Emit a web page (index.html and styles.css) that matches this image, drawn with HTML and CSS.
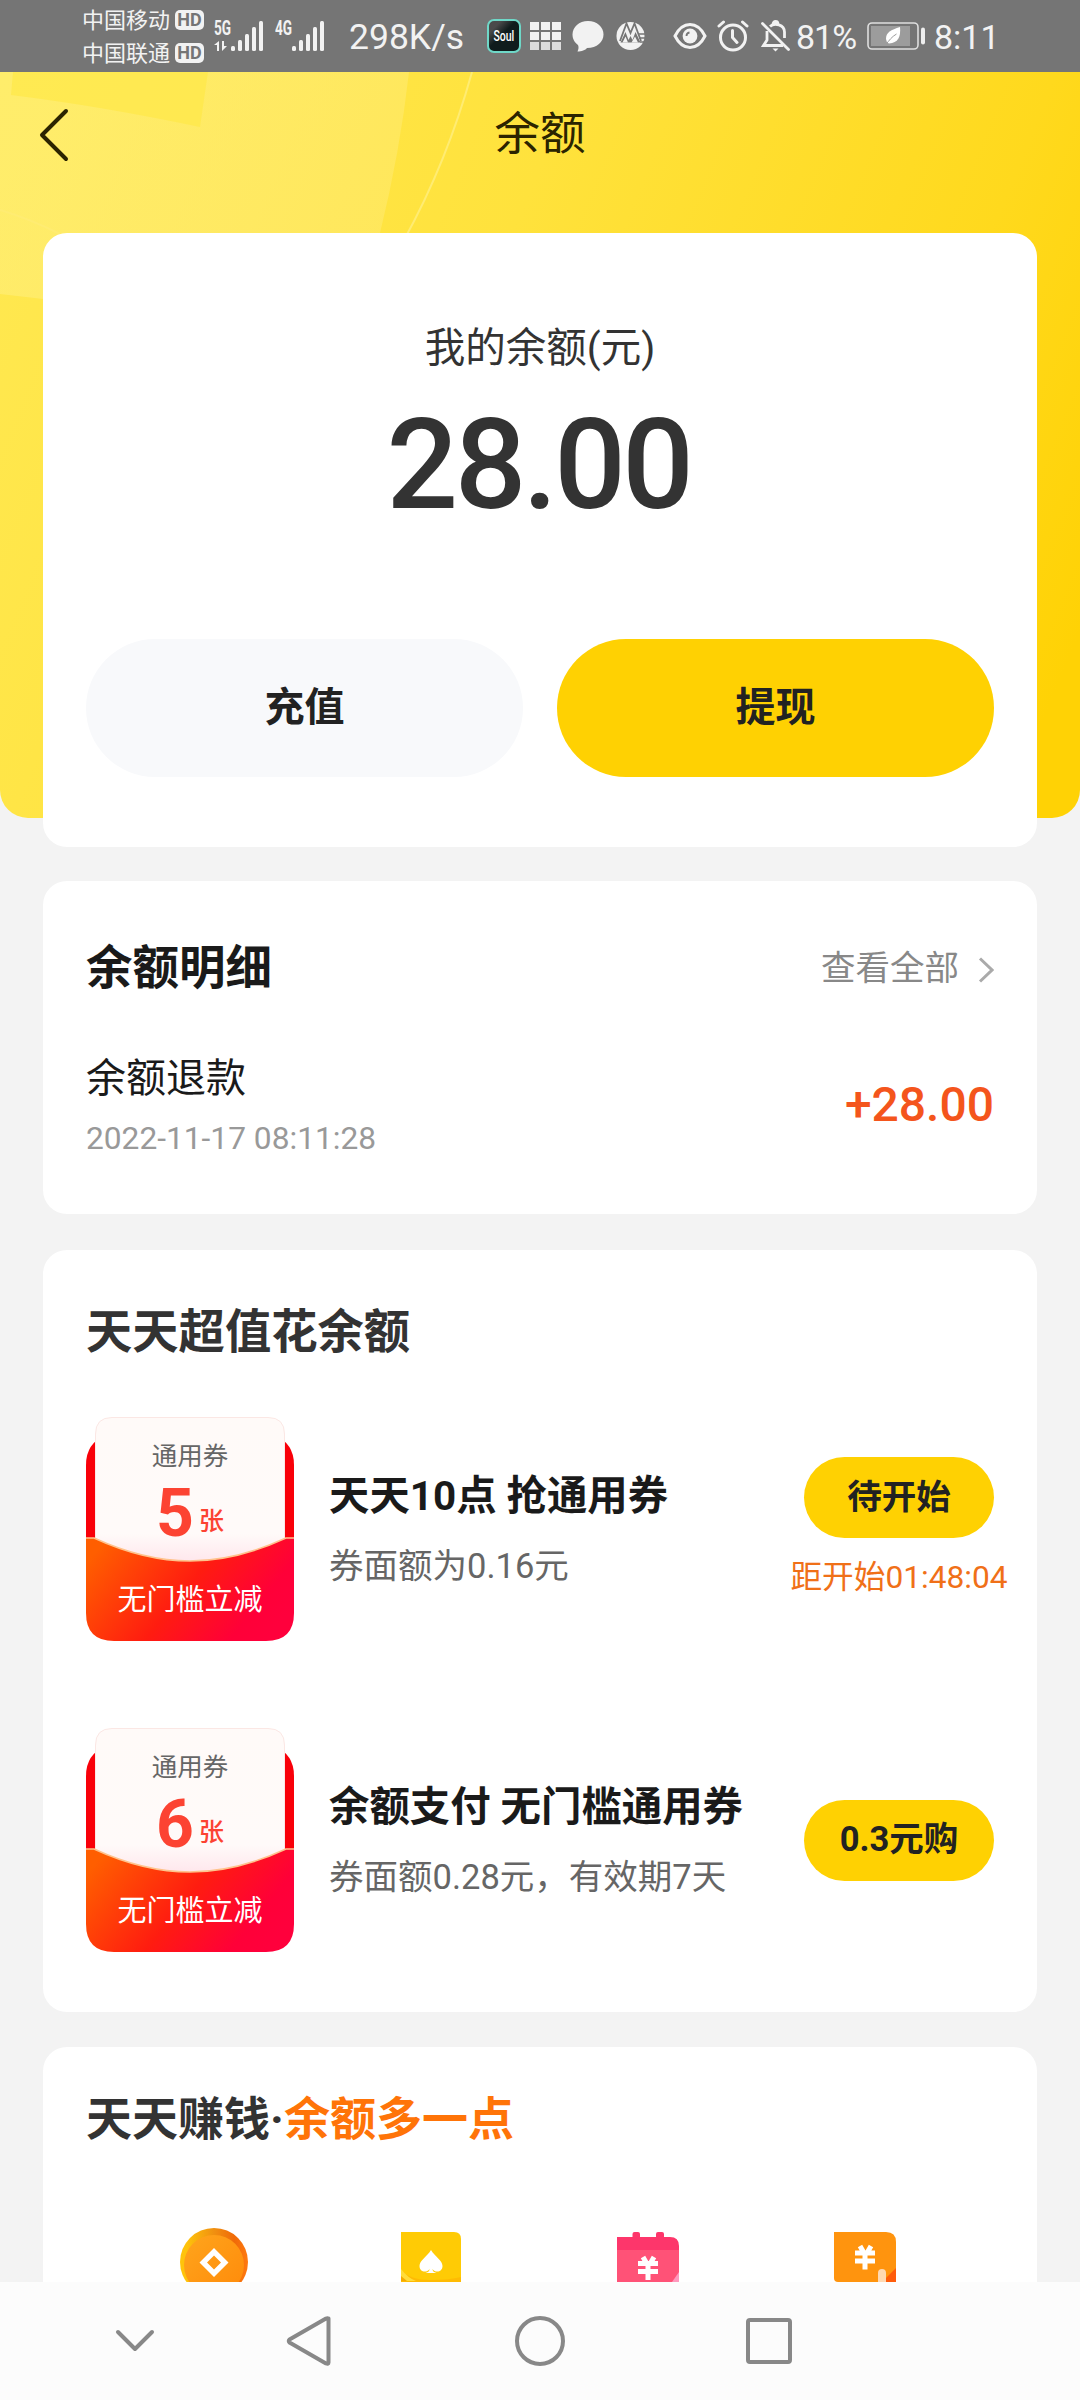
FILE: index.html
```html
<!DOCTYPE html>
<html lang="zh-CN">
<head>
<meta charset="utf-8">
<title>余额</title>
<link rel="stylesheet" href="styles.css">
</head>
<body>
<div class="app">
  <header class="status">
    <div class="carriers">
      <div class="carrier"><span>中国移动</span><b class="hd">HD</b></div>
      <div class="carrier"><span>中国联通</span><b class="hd">HD</b></div>
    </div>
    <div class="signal signal-5g">
      <span class="net">5G</span>
      <svg width="51" height="32" viewBox="0 0 51 32" fill="#f2f2f2">
        <path d="M0 25l5-4v10H3v-6zM8 21v10l5-5h-3v-5z"/>
        <rect x="17" y="26" width="4" height="5" rx="1.5"/><rect x="24" y="20" width="4" height="11" rx="1.5"/><rect x="31" y="14" width="4" height="17" rx="1.5"/><rect x="38" y="7" width="4" height="24" rx="1.5"/><rect x="45" y="1" width="4" height="30" rx="1.5"/>
      </svg>
    </div>
    <div class="signal signal-4g">
      <span class="net">4G</span>
      <svg width="51" height="32" viewBox="0 0 51 32" fill="#f2f2f2">
        <rect x="17" y="26" width="4" height="5" rx="1.5"/><rect x="24" y="20" width="4" height="11" rx="1.5"/><rect x="31" y="14" width="4" height="17" rx="1.5"/><rect x="38" y="7" width="4" height="24" rx="1.5"/><rect x="45" y="1" width="4" height="30" rx="1.5"/>
      </svg>
    </div>
    <span class="speed">298K/s</span>
    <span class="soul"><span>Soul</span></span>
    <svg class="i-grid" width="32" height="30" viewBox="0 0 32 30" fill="#f2f2f2">
      <path d="M0 1h9v8H0zM11 1h9v8h-9zM22 1h9v8h-9zM0 11h9v8H0zM11 11h9v8h-9zM22 11h9v8h-9z"/>
      <path d="M0 21h9v8H0zM11 21h9v8h-9zM22 21h9v8h-9z" fill="#dcdcdc"/>
    </svg>
    <svg class="i-chat" width="32" height="32" viewBox="0 0 32 32" fill="#f2f2f2">
      <path d="M16 1C7 1 .5 7 .5 14.500c0 5 2.500 8 5.500 10.500 1 2.500.5 4-.5 6.500 4 0 8-1.500 9.500-3.500C25 28 31.500 22 31.500 14.500S25 1 16 1z"/>
    </svg>
    <svg class="i-bank" width="30" height="30" viewBox="0 0 30 30">
      <circle cx="14.500" cy="15" r="14" fill="#f2f2f2"/>
      <path d="M4 20L10.500 2.500 14.500 12 18.500 2.500 25 20" fill="none" stroke="#757575" stroke-width="1.800"/>
      <path d="M4.500 21.500L9.500 11l3 8 2-4 2 4 3-8 5 10.500z" fill="#757575"/>
      <path d="M6.500 21.500l3-6 2.500 6zM15.500 21.500l3.500-6 3 6z" fill="#f2f2f2"/>
      <path d="M22 13h8M23 17h7M24 21h6" stroke="#757575" stroke-width="1.500"/>
    </svg>
    <svg class="i-eye" width="34" height="28" viewBox="0 0 34 28" fill="none" stroke="#f2f2f2" stroke-width="3">
      <path d="M2 14C6 6 11 2.500 17 2.500S28 6 32 14C28 22 23 25.500 17 25.500S6 22 2 14z"/>
      <circle cx="17" cy="14" r="7.400" fill="#f2f2f2" stroke="none"/>
      <path d="M13.500 14a3.500 3.500 0 0 1 3-3.500" stroke="#757575" stroke-width="1.800"/>
    </svg>
    <svg class="i-alarm" width="32" height="32" viewBox="0 0 32 32" fill="none" stroke="#f2f2f2" stroke-width="3" stroke-linecap="round">
      <circle cx="16" cy="17.500" r="12.500"/><path d="M15.500 10.500v7l4.500 5M2 6l4.500-4M30 6l-4.500-4"/>
    </svg>
    <svg class="i-bell" width="30" height="32" viewBox="0 0 30 32" fill="none" stroke="#f2f2f2" stroke-width="2.800">
      <path d="M6 11v9l-3.500 5.500H22M9 6.500C13 2.500 24 4 23.500 13v5M12 4.500c0-4 5-4 5 0"/><path d="M1.500 3.500l26 26" stroke-linecap="round"/>
      <path d="M11.500 28.500h6l-3 3z" fill="#f2f2f2" stroke="none"/>
    </svg>
    <span class="percent">81%</span>
    <svg class="i-battery" width="59" height="28" viewBox="0 0 59 28">
      <rect x="1" y="1" width="50" height="26" rx="4" fill="none" stroke="#dedede" stroke-width="1.600"/>
      <rect x="4" y="4" width="39" height="20" fill="#9c9c9c"/>
      <rect x="54" y="5.500" width="4" height="17" rx="2" fill="#eee"/>
      <path d="M33 5c-9 3-14 5-14 12l1 3.500 2 1C31 21 34 15 33 5z" fill="#fff"/><path d="M18.500 23c4-5 6-8 11-11" stroke="#9c9c9c" fill="none"/>
    </svg>
    <span class="clock">8:11</span>
  </header>

  <main class="page">
    <svg class="hero" width="1080" height="746" viewBox="0 0 1080 746">
      <defs>
        <linearGradient id="heroFill" gradientUnits="userSpaceOnUse" x1="0" y1="120" x2="1080" y2="560">
          <stop offset="0" stop-color="#ffe850"/><stop offset=".42" stop-color="#ffe23c"/><stop offset=".8" stop-color="#ffd91d"/><stop offset="1" stop-color="#ffd205"/>
        </linearGradient>
        <linearGradient id="sheen" x1="0" y1="0" x2="1" y2=".4">
          <stop offset="0" stop-color="#fff490" stop-opacity=".42"/><stop offset="1" stop-color="#fff1a0" stop-opacity=".28"/>
        </linearGradient>
      </defs>
      <path d="M0 0H1080V718A28 28 0 0 1 1052 746H28A28 28 0 0 1 0 718z" fill="url(#heroFill)"/>
      <path d="M0 0H409Q400 80 380 161L330 260 0 222z" fill="url(#sheen)"/>
      <path d="M13 0H208L200 55Q100 34 11 23z" fill="#ffe84a" fill-opacity=".75"/>
      <path d="M472 0Q447 90 404 168M0 138Q30 147 60 162" fill="none" stroke="#ffec72" stroke-width="2"/>
    </svg>
    <div class="titlebar">
      <svg class="back" width="30" height="54" viewBox="0 0 30 54" fill="none" stroke="#2b2400" stroke-width="4" stroke-linecap="round" stroke-linejoin="round"><path d="M27 3L3 27l24 24"/></svg>
      <h1 class="title">余额</h1>
    </div>

    <section class="card balance">
      <div class="label">我的余额(元)</div>
      <div class="amount">28.00</div>
      <div class="actions">
        <button class="btn btn-plain">充值</button>
        <button class="btn btn-main">提现</button>
      </div>
    </section>

    <section class="card detail">
      <div class="head">
        <h2>余额明细</h2>
        <a class="more">查看全部<svg width="16" height="26" viewBox="0 0 16 26" fill="none" stroke="#aaa" stroke-width="3"><path d="M2 1.500L14 13 2 24.500"/></svg></a>
      </div>
      <div class="record">
        <div>
          <div class="record-name">余额退款</div>
          <div class="record-time">2022-11-17 08:11:28</div>
        </div>
        <div class="record-sum">+28.00</div>
      </div>
    </section>

    <section class="card spend">
      <h2 class="soft">天天超值花余额</h2>
      <div class="offer">
        <div class="coupon">
          <svg class="coupon-bg" width="208" height="225" viewBox="0 0 208 225">
            <defs>
              <linearGradient id="pocket" x1="0" y1=".25" x2="1" y2=".65"><stop offset="0" stop-color="#ff5e00"/><stop offset=".5" stop-color="#ff1c10"/><stop offset=".85" stop-color="#ff0038"/><stop offset="1" stop-color="#ff003c"/></linearGradient>
              <linearGradient id="paper" x1="0" y1="0" x2="0" y2="1"><stop offset="0" stop-color="#fffaf8"/><stop offset=".8" stop-color="#fffaf9"/><stop offset="1" stop-color="#ffe6ec"/></linearGradient>
            </defs>
            <path d="M0 124V48Q0 26 20 18H188Q208 26 208 48V124z" fill="#f90009"/>
            <path d="M9.500 135V17Q9.500.5 26 .5H182Q198.500.5 198.500 17V135L150 146H58z" fill="url(#paper)" stroke="#fbe7e4"/>
            <path d="M0 121H8Q58 144 104 144T200 121H208V196Q208 224 180 224H28Q0 224 0 196z" fill="url(#pocket)"/>
            <path d="M0 121H8Q58 144 104 144T200 121H208" fill="none" stroke="#ffc38c" stroke-width="1.600"/>
          </svg>
          <div class="coupon-kind">通用券</div>
          <div class="coupon-count"><b>5</b><span>张</span></div>
          <div class="coupon-note">无门槛立减</div>
        </div>
        <div class="offer-text"><h3>天天10点 抢通用券</h3><p>券面额为0.16元</p></div>
        <div class="offer-act act-timed"><button class="pill">待开始</button><span class="timer">距开始01:48:04</span></div>
      </div>
      <div class="offer">
        <div class="coupon">
          <svg class="coupon-bg" width="208" height="225" viewBox="0 0 208 225">
            <path d="M0 124V48Q0 26 20 18H188Q208 26 208 48V124z" fill="#f90009"/>
            <path d="M9.500 135V17Q9.500.5 26 .5H182Q198.500.5 198.500 17V135L150 146H58z" fill="url(#paper)" stroke="#fbe7e4"/>
            <path d="M0 121H8Q58 144 104 144T200 121H208V196Q208 224 180 224H28Q0 224 0 196z" fill="url(#pocket)"/>
            <path d="M0 121H8Q58 144 104 144T200 121H208" fill="none" stroke="#ffc38c" stroke-width="1.600"/>
          </svg>
          <div class="coupon-kind">通用券</div>
          <div class="coupon-count"><b>6</b><span>张</span></div>
          <div class="coupon-note">无门槛立减</div>
        </div>
        <div class="offer-text"><h3>余额支付 无门槛通用券</h3><p>券面额0.28元，有效期7天</p></div>
        <div class="offer-act"><button class="pill">0.3元购</button></div>
      </div>
    </section>

    <section class="card earn">
      <h2 class="soft">天天赚钱·<em>余额多一点</em></h2>
      <div class="tasks">
        <svg width="70" height="70" viewBox="0 0 70 70">
          <defs><linearGradient id="rim" x1="0" y1="0" x2="1" y2="0"><stop offset=".1" stop-color="#ffc30b"/><stop offset=".5" stop-color="#f09010"/><stop offset=".8" stop-color="#f06a08"/><stop offset="1" stop-color="#ff7a10"/></linearGradient>
          <linearGradient id="coin" x1="0" y1="0" x2="1" y2="1"><stop offset="0" stop-color="#ffa51c"/><stop offset="1" stop-color="#ff8a0a"/></linearGradient></defs>
          <circle cx="35" cy="34" r="34" fill="url(#rim)"/><ellipse cx="35" cy="37" rx="30" ry="30" fill="url(#coin)"/>
          <path d="M35 20L49.500 34.500 35 49 20.500 34.500zM35 27.500l-7 7 7 7 7-7z" fill="#fff" fill-rule="evenodd"/>
        </svg>
        <svg width="62" height="70" viewBox="0 0 62 70">
          <path d="M1 4H54Q61 4 61 11V70H1z" fill="#ffcb05"/><path d="M1 42Q10 52 30 52T61 49V70H1z" fill="#ffbb03"/><path d="M1 41Q8 50 16 53H1z" fill="#ffdc3a"/><path d="M1 48l6 5H1z" fill="#f5aa00"/>
          <path d="M31 22C27 29 19.500 32 19.500 38c0 6 7 7.500 10 3 0 2-1 3-4 4h11c-3-1-4-2-4-4 3 4.500 10 3 10-3 0-6-7.500-9-11.500-16z" fill="#fff"/>
        </svg>
        <svg width="62" height="70" viewBox="0 0 62 70">
          <path d="M0 9H15.500V6Q15.500 4 17.500 4H21Q23 4 23 6V9H39V6Q39 4 41 4h4Q47 4 47 6V9H53Q62 9 62 18V24H0z" fill="#fd366b"/><path d="M0 22H62V70H0z" fill="#ff5277"/><path d="M62 44V54H55z" fill="#ff98bd"/>
          <path d="M26 29l4 7M37 29l-4 7M21 35.500h20M21 43.500h20M31 33v19" stroke="#fff" stroke-width="5"/>
        </svg>
        <svg width="62" height="70" viewBox="0 0 62 70">
          <path d="M0 4H52Q62 4 62 14V54H4Q0 54 0 50z" fill="#ff940e"/><path d="M62 40V54H48z" fill="#ff5c0b"/><rect x="44" y="41" width="8" height="20" rx="4" fill="#ffd9b2"/>
          <path d="M26 18l4 7M37 18l-4 7M21 25h20M21 33h20M31 22.500v19" stroke="#fff" stroke-width="5"/>
        </svg>
      </div>
    </section>
  </main>

  <nav class="navbar">
    <svg class="nav-hide" width="40" height="24" viewBox="0 0 40 24"><path d="M3 3l17 17L37 3"/></svg>
    <svg class="nav-back" width="46" height="52" viewBox="0 0 46 52"><path d="M42.500 3.500Q41.500 2.800 40 3.500L3.500 24.500Q2 26 3.500 27.500L40 48.500Q42.500 49.500 42.500 47.500z"/></svg>
    <svg class="nav-home" width="52" height="52" viewBox="0 0 52 52"><circle cx="26" cy="26" r="23"/></svg>
    <svg class="nav-recent" width="48" height="48" viewBox="0 0 48 48"><rect x="3" y="3" width="42" height="42" rx="2"/></svg>
  </nav>
</div>
</body>
</html>
```
FILE: styles.css
```css
* { box-sizing: border-box; margin: 0; padding: 0; }
body {
  width: 1080px;
  height: 2400px;
  overflow: hidden;
  background: #f3f3f3;
  font-family: Roboto, "Noto Sans CJK SC", sans-serif;
  color: #1a1a1a;
}
svg { display: block; flex: none; }
button { border: 0; font-family: inherit; color: #222; }
.app { display: flex; flex-direction: column; height: 2400px; }

/* status bar */
.status {
  display: flex;
  align-items: center;
  flex: none;
  height: 72px;
  padding-left: 82px;
  background: #757575;
  color: #f2f2f2;
  white-space: nowrap;
}
.carriers { width: 132px; padding-top: 1px; }
.carrier { display: flex; align-items: center; gap: 5px; height: 33px; font-size: 22px; line-height: 33px; }
.hd {
  width: 29px; height: 20px;
  border-radius: 5px;
  background: #f2f2f2;
  color: #757575;
  font-size: 18px;
  line-height: 20px;
  text-align: center;
}
.signal { position: relative; width: 61px; }
.net {
  position: absolute;
  left: 0; top: -1px;
  font: 700 20px/18px Roboto, sans-serif;
  transform: scaleX(.68);
  transform-origin: left;
}
.signal-4g { width: 74px; }
.speed { width: 138px; padding-top: 2px; font-size: 35.500px; }
.soul {
  display: flex;
  justify-content: center;
  width: 34px; height: 34px;
  border: 2px solid #6fd8c8;
  border-radius: 7px;
  background: linear-gradient(135deg, #4a4a4a 20%, #101c1c 45%);
  color: #fff;
  font: 500 15px/30px Roboto, sans-serif;
}
.soul span { transform: scaleX(.7); }
.i-grid { margin-left: 9px; }
.i-chat { margin-left: 10px; }
.i-bank { margin-left: 12px; }
.i-eye { margin-left: 27px; }
.i-alarm { margin-left: 10px; }
.i-bell { margin-left: 12px; }
.percent { width: 62px; margin-left: 5px; padding-top: 2px; font-size: 34px; letter-spacing: -1px; }
.i-battery { margin-left: 9px; }
.clock { margin-left: 8px; padding-top: 2px; font-size: 34px; }

/* page */
.page { position: relative; flex: none; height: 2210px; padding: 0 43px; overflow: hidden; }
.hero { position: absolute; left: 0; top: 0; }
.titlebar { position: relative; display: flex; align-items: center; height: 161px; padding-bottom: 35px; }
.back { margin-left: -4px; }
.title { flex: 1; margin-right: 26px; font-size: 45.500px; font-weight: 400; line-height: 60px; text-align: center; color: #2b2400; }

.card { position: relative; margin-bottom: 34px; padding: 0 43px; border-radius: 24px; background: #fff; }
h2 { font-size: 46px; font-weight: 700; line-height: 60px; white-space: nowrap; }
.soft { color: #333; }

.balance { height: 614px; padding-top: 85px; text-align: center; color: #333; }
.label { font-size: 40.500px; line-height: 60px; }
.amount { margin-top: 27px; font-size: 126px; font-weight: 500; line-height: 120px; letter-spacing: -3.500px; text-indent: -3px; }
.actions { display: grid; grid-template-columns: 1fr 1fr; gap: 34px; margin-top: 114px; }
.btn { height: 138px; padding-bottom: 8px; border-radius: 69px; font-size: 40px; font-weight: 700; }
.btn-plain { background: #f8f9fb; }
.btn-main { background: #ffd102; }

.detail { height: 333px; padding-top: 57px; margin-bottom: 36px; }
.head, .record { display: flex; justify-content: space-between; align-items: center; }
.head h2 { font-size: 46.500px; }
.more { display: flex; align-items: center; gap: 19px; font-size: 34.500px; line-height: 60px; color: #888; }
.more svg { margin-top: 4px; }
.record { margin-top: 53px; }
.record-name { font-size: 40px; line-height: 56px; }
.record-time { margin-top: 12px; font-size: 31.700px; line-height: 40px; color: #999; }
.record-sum { font-size: 48px; font-weight: 500; line-height: 56px; color: #f4551c; }

.spend { height: 762px; padding-top: 52px; margin-bottom: 35px; }
.spend h2 { font-size: 46.300px; }
.offer { display: flex; align-items: center; height: 224px; margin-top: 55px; }
.offer + .offer { margin-top: 87px; }
.coupon { position: relative; width: 208px; height: 224px; flex: none; text-align: center; }
.coupon-bg { position: absolute; left: 0; top: 0; }
.coupon-kind, .coupon-count, .coupon-note { position: relative; }
.coupon-kind { padding-top: 22px; font-size: 25.500px; line-height: 34px; color: #666; }
.coupon-count {
  display: flex;
  justify-content: center;
  gap: 5px;
  margin-top: 7px;
  font-size: 25px;
  font-weight: 500;
  line-height: 68px;
  color: #fc4332;
}
.coupon-count b { font-size: 66px; }
.coupon-count span { padding-top: 8px; }
.coupon-note { margin-top: 24px; font-size: 29px; line-height: 40px; color: #fff; }
.offer-text { flex: 1; margin-left: 35px; white-space: nowrap; }
.offer-text h3 { font-size: 40.400px; font-weight: 700; line-height: 56px; }
.offer-text p { margin-top: 17px; font-size: 34.500px; line-height: 48px; color: #666; }
.offer-act { display: flex; flex-direction: column; align-items: center; flex: none; width: 190px; }
.act-timed { align-self: flex-start; margin-top: 40px; }
.pill { width: 190px; height: 81px; padding-bottom: 8px; border-radius: 41px; background: #ffd102; font-size: 34.500px; font-weight: 700; }
.timer { margin-top: 20px; font-size: 31.700px; line-height: 40px; white-space: nowrap; color: #f07018; }

.earn { height: 400px; padding-top: 42px; }
.earn em { font-style: normal; color: #ff7408; }
.tasks { display: grid; grid-template-columns: repeat(4, 1fr); justify-items: center; margin: 79px 21px 0 19px; }

/* system navigation */
.navbar { display: flex; align-items: center; flex: none; height: 118px; padding-left: 115px; background: #fcfcfc; }
.navbar svg { fill: none; stroke: #888; stroke-width: 4; stroke-linecap: round; stroke-linejoin: round; }
.nav-back { margin-left: 131px; }
.nav-home { margin-left: 182px; }
.nav-recent { margin-left: 179px; }
```
